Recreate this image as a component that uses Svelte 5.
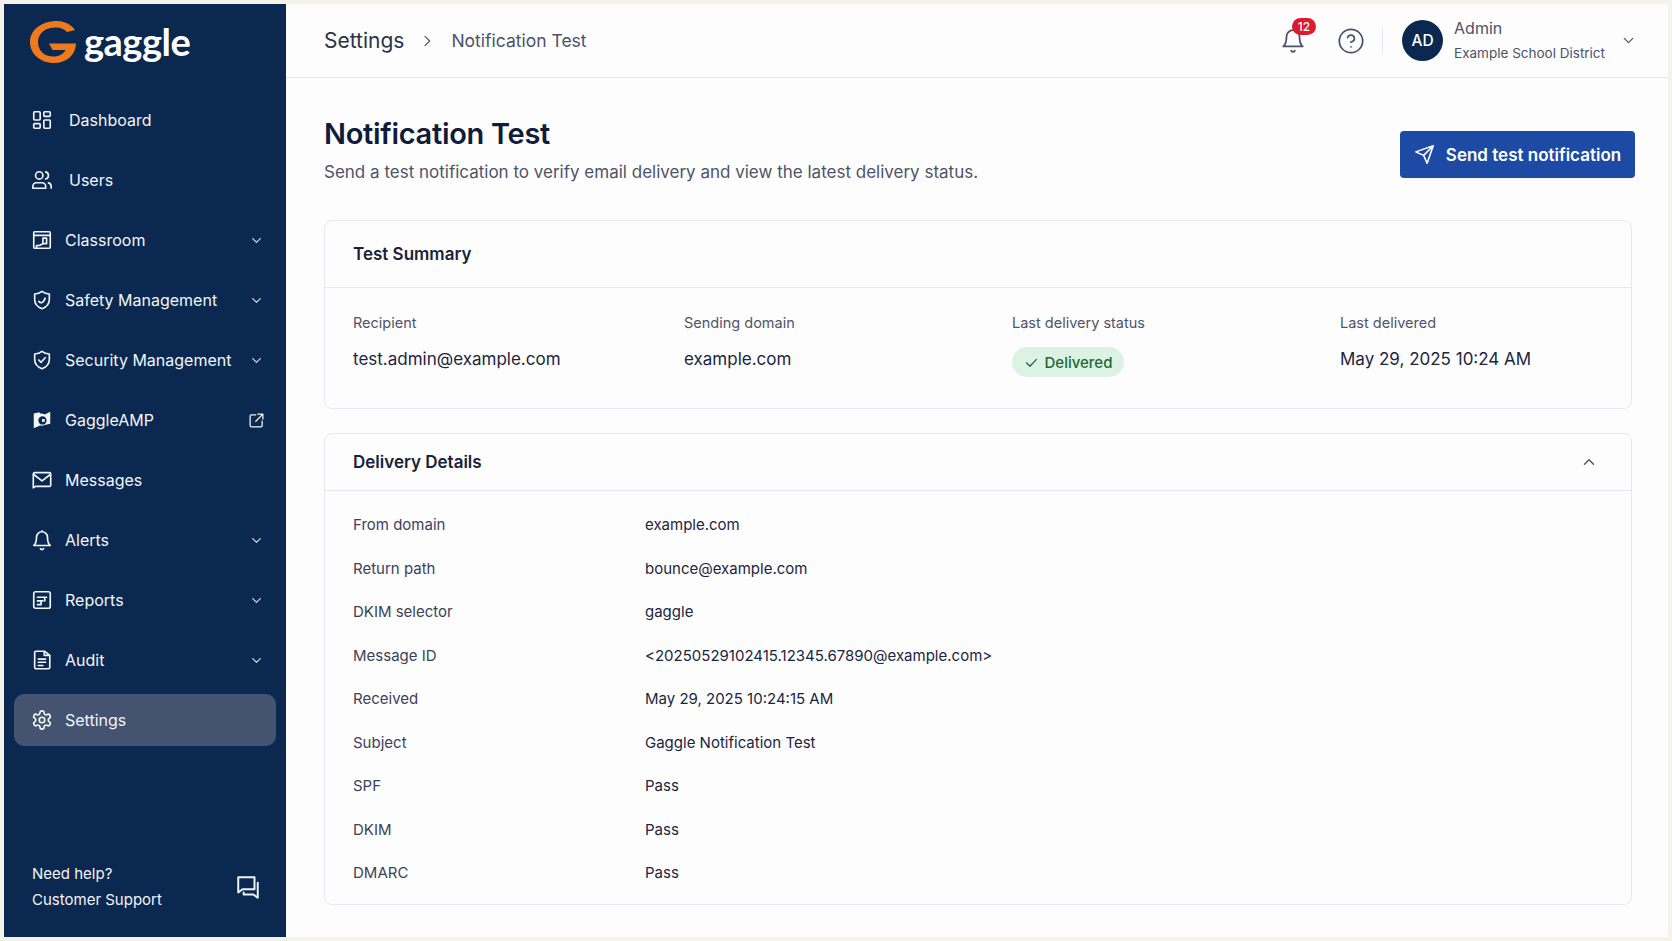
<script lang="ts">
	const shieldA = 'M12 2.5c2.2 1.7 4.8 2.6 8 2.9v6.1c0 4.8-3.2 8.200-8 10-4.800-1.800-8-5.200-8-10V5.400c3.200-.3 5.800-1.200 8-2.900z';

	const nav = [
		{ label: 'Dashboard', wide: true, icon: 'M4 3h5a1 1 0 0 1 1 1v7a1 1 0 0 1-1 1H4a1 1 0 0 1-1-1V4a1 1 0 0 1 1-1z M15 3h5a1 1 0 0 1 1 1v3a1 1 0 0 1-1 1h-5a1 1 0 0 1-1-1V4a1 1 0 0 1 1-1z M15 12h5a1 1 0 0 1 1 1v7a1 1 0 0 1-1 1h-5a1 1 0 0 1-1-1v-7a1 1 0 0 1 1-1z M4 16h5a1 1 0 0 1 1 1v3a1 1 0 0 1-1 1H4a1 1 0 0 1-1-1v-3a1 1 0 0 1 1-1z' },
		{ label: 'Users', wide: true, icon: 'M16 21v-2a4 4 0 0 0-4-4H6a4 4 0 0 0-4 4v2z M13 7a4 4 0 1 1-8 0 4 4 0 0 1 8 0z M22 21v-2a4 4 0 0 0-3-3.870 M16 3.130a4 4 0 0 1 0 7.750' },
		{ label: 'Classroom', chevron: true, icon: 'M4 3h16a1 1 0 0 1 1 1v16a1 1 0 0 1-1 1H4a1 1 0 0 1-1-1V4a1 1 0 0 1 1-1z M3 7h18 M6 21v-3h3 M13 10h4v6h-4z M9 18l4-2' },
		{ label: 'Safety Management', chevron: true, icon: shieldA + ' M8.500 13.500c1 1.200 1.800 1.700 3 1.500 1.500-.4 3-2.500 4-5' },
		{ label: 'Security Management', chevron: true, icon: shieldA + ' M8.500 12l2.500 2.500 4.500-5' },
		{ label: 'GaggleAMP', external: true, brand: true },
		{ label: 'Messages', icon: 'M4 4h16a1.500 1.500 0 0 1 1.500 1.500v12a1.500 1.500 0 0 1-1.500 1.500H5l-2.500 1.500V5.500A1.500 1.500 0 0 1 4 4z M3 6l9 7 9-7' },
		{ label: 'Alerts', chevron: true, icon: 'M6 9a6 6 0 0 1 12 0c0 6 1 7.500 3 9H3c2-1.500 3-3 3-9z M10.300 21.500a1.940 1.940 0 0 0 3.400 0 M12 3V2' },
		{ label: 'Reports', chevron: true, icon: 'M5 3h14a2 2 0 0 1 2 2v14a2 2 0 0 1-2 2H5a2 2 0 0 1-2-2V5a2 2 0 0 1 2-2z M7 9h10 M7 13h6 M15 9v4 M7 17h3 M11 13v4' },
		{ label: 'Audit', chevron: true, icon: 'M4 4a1.500 1.500 0 0 1 1.500-1.500H15L20.500 7v13a1.500 1.500 0 0 1-1.500 1.500H5.500A1.500 1.500 0 0 1 4 20z M14.500 2.500V7h6 M8 11h8 M8 14.500h8 M8 18h5' },
		{ label: 'Settings', active: true, icon: 'M12.220 2h-.44a2 2 0 0 0-2 2v.18a2 2 0 0 1-1 1.730l-.43.25a2 2 0 0 1-2 0l-.15-.08a2 2 0 0 0-2.730.73l-.22.38a2 2 0 0 0 .73 2.730l.15.1a2 2 0 0 1 1 1.720v.51a2 2 0 0 1-1 1.740l-.15.09a2 2 0 0 0-.73 2.730l.22.38a2 2 0 0 0 2.730.73l.15-.08a2 2 0 0 1 2 0l.43.25a2 2 0 0 1 1 1.730V20a2 2 0 0 0 2 2h.44a2 2 0 0 0 2-2v-.18a2 2 0 0 1 1-1.730l.43-.25a2 2 0 0 1 2 0l.15.08a2 2 0 0 0 2.730-.73l.22-.39a2 2 0 0 0-.73-2.730l-.15-.08a2 2 0 0 1-1-1.740v-.5a2 2 0 0 1 1-1.740l.15-.09a2 2 0 0 0 .73-2.730l-.22-.38a2 2 0 0 0-2.730-.73l-.15.08a2 2 0 0 1-2 0l-.43-.25a2 2 0 0 1-1-1.730V4a2 2 0 0 0-2-2z M15 12a3 3 0 1 1-6 0 3 3 0 0 1 6 0z' },
	];

	const summary = [
		{ label: 'Recipient', value: 'test.admin@example.com' },
		{ label: 'Sending domain', value: 'example.com' },
		{ label: 'Last delivery status', badge: 'Delivered' },
		{ label: 'Last delivered', value: 'May 29, 2025 10:24 AM' },
	];

	const details = [
		['From domain', 'example.com'],
		['Return path', 'bounce@example.com'],
		['DKIM selector', 'gaggle'],
		['Message ID', '<20250529102415.12345.67890@example.com>'],
		['Received', 'May 29, 2025 10:24:15 AM'],
		['Subject', 'Gaggle Notification Test'],
		['SPF', 'Pass'],
		['DKIM', 'Pass'],
		['DMARC', 'Pass'],
	];
</script>

<div class="frame">
	<aside class="sidebar">
		<div class="logo">
			<svg class="logo-mark" viewBox="0 0 46 42" aria-hidden="true">
				<path fill="#ee7a1c" d="M45 9C41 3.500 35 0 27 0 11.500 0 0 9 0 21s10.500 21 24 21c13 0 21.500-8 22-19.500H19l3.500 6.500h13c-2 4-6.500 6.500-12 6.500C14 35.500 8 29.500 8 21S15 6.500 26 6.500c5 0 8 1.500 11 4.500z" />
			</svg>
			<span class="logo-text">gaggle</span>
		</div>

		<nav class="nav">
			{#each nav as item}
				<div class="item" class:active={item.active} class:wide={item.wide}>
					{#if item.brand}
						<svg class="icon" viewBox="0 0 24 24" aria-hidden="true">
							<path class="solid" fill-rule="evenodd" d="M3 5l6-1.500 1 1.500a8 8 0 0 1 5 1l6-3v13l-6 1.500a8 8 0 0 1-5 .5L3 21z M12.500 8a4.500 4.500 0 1 0 0 9 4.500 4.500 0 0 0 0-9z" />
							<path class="solid" d="M12 11h3v3h-3z" />
						</svg>
					{:else}
						<svg class="icon" viewBox="0 0 24 24" aria-hidden="true"><path d={item.icon} /></svg>
					{/if}
					<span class="label">{item.label}</span>
					{#if item.chevron}
						<svg class="chev" viewBox="0 0 24 24" aria-hidden="true"><path d="M6 9l6 6 6-6" /></svg>
					{:else if item.external}
						<svg class="ext" viewBox="0 0 24 24" aria-hidden="true"><path d="M11 4H5a2 2 0 0 0-2 2v13a2 2 0 0 0 2 2h13a2 2 0 0 0 2-2v-6 M14 3h7v7 M21 3L11 13" /></svg>
					{/if}
				</div>
			{/each}
		</nav>

		<div class="help">
			<div class="help-text">
				<div>Need help?</div>
				<div>Customer Support</div>
			</div>
			<svg class="help-icon" viewBox="0 0 24 24" aria-hidden="true"><path d="M3 3h15v11H7l-4 3z M21 8v14l-4-3H8v-2" /></svg>
		</div>
	</aside>

	<div class="main">
		<header class="topbar">
			<div class="crumbs">
				<span class="crumb-root">Settings</span>
				<svg class="crumb-sep" viewBox="0 0 24 24" aria-hidden="true"><path d="M9 5l7 7-7 7" /></svg>
				<span class="crumb-leaf">Notification Test</span>
			</div>
			<div class="tools">
				<div class="bell">
					<svg viewBox="0 0 24 24" aria-hidden="true"><path d="M6 8a6 6 0 0 1 12 0c0 7 3 9 3 9H3s3-2 3-9z M10.300 21a1.940 1.940 0 0 0 3.400 0" /></svg>
					<span class="count">12</span>
				</div>
				<svg class="help-circle" viewBox="0 0 24 24" aria-hidden="true"><path d="M22 12a10 10 0 1 1-20 0 10 10 0 0 1 20 0z M9.090 9a3 3 0 0 1 5.830 1c0 2-3 3-3 3 M12 17h.01" /></svg>
				<span class="divider"></span>
				<div class="avatar">AD</div>
				<div class="who">
					<div class="who-name">Admin</div>
					<div class="who-org">Example School District</div>
				</div>
				<svg class="who-chev" viewBox="0 0 24 24" aria-hidden="true"><path d="M6 9l6 6 6-6" /></svg>
			</div>
		</header>

		<main class="content">
			<div class="page-head">
				<div>
					<h1>Notification Test</h1>
					<p>Send a test notification to verify email delivery and view the latest delivery status.</p>
				</div>
				<button class="send">
					<svg viewBox="0 0 24 24" aria-hidden="true"><path d="M22 2l-7 20-4-9-9-4z M22 2L11 13" /></svg>
					Send test notification
				</button>
			</div>

			<section class="card">
				<div class="card-head summary-head"><h2>Test Summary</h2></div>
				<div class="summary">
					{#each summary as cell}
						<div>
							<div class="cell-label">{cell.label}</div>
							{#if cell.badge}
								<span class="badge">
									<svg viewBox="0 0 24 24" aria-hidden="true"><path d="M4 12.500l5.500 5.500L20 7" /></svg>
									{cell.badge}
								</span>
							{:else}
								<div class="cell-value">{cell.value}</div>
							{/if}
						</div>
					{/each}
				</div>
			</section>

			<section class="card details-card">
				<div class="card-head details-head">
					<h2>Delivery Details</h2>
					<svg viewBox="0 0 24 24" aria-hidden="true"><path d="M6 15l6-6 6 6" /></svg>
				</div>
				<div class="details">
					{#each details as [name, value]}
						<div class="row">
							<span class="row-name">{name}</span>
							<span class="row-value">{value}</span>
						</div>
					{/each}
				</div>
			</section>
		</main>
	</div>
</div>

<style>
	:global(body) {
		margin: 0;
		background: #f5f2ea;
		font-family: Inter, "Liberation Sans", sans-serif;
	}

	.frame {
		display: flex;
		height: 933px;
		margin: 4px 4px 4px 4px;
		background: #fdfdfe;
		overflow: hidden;
	}

	svg {
		fill: none;
		stroke: currentColor;
		stroke-width: 2;
		stroke-linecap: round;
		stroke-linejoin: round;
		flex: none;
	}

	/* sidebar */
	.sidebar {
		width: 282px;
		flex: none;
		display: flex;
		flex-direction: column;
		background: #0b2850;
		color: #f2f5f9;
	}

	.logo {
		height: 86px;
		display: flex;
		align-items: center;
		gap: 8px;
		padding-left: 26px;
		padding-bottom: 10px;
		box-sizing: border-box;
	}

	.logo-mark {
		width: 46px;
		height: 42px;
		stroke: none;
	}

	.logo-text {
		font-family: Lato, sans-serif;
		font-weight: 700;
		font-size: 38px;
		line-height: 1;
		letter-spacing: -0.5px;
		color: #fff;
		margin-top: -2px;
	}

	.nav {
		display: flex;
		flex-direction: column;
		padding: 0 10px;
	}

	.item {
		height: 60px;
		display: flex;
		align-items: center;
		padding: 0 12px 0 17px;
		font-size: 16px;
	}

	.item.active {
		height: 52px;
		margin-top: 4px;
		margin-bottom: 4px;
		background: #44536f;
		border-radius: 10px;
	}

	.icon {
		width: 22px;
		height: 22px;
		stroke-width: 1.8;
		margin-right: 12px;
	}

	.solid {
		fill: currentColor;
		stroke: none;
	}

	.item.wide .icon {
		margin-right: 16px;
	}

	.label {
		flex: 1;
	}

	.chev {
		width: 15px;
		height: 15px;
		opacity: 0.85;
		margin-right: 0;
	}

	.ext {
		width: 17px;
		height: 17px;
		margin-right: -1px;
		stroke-width: 1.8;
	}

	.help {
		margin-top: auto;
		height: 100px;
		padding: 0 25px 0 28px;
		display: flex;
		align-items: center;
		justify-content: space-between;
		font-size: 15px;
		line-height: 26px;
	}

	.help-icon {
		width: 26px;
		height: 26px;
		stroke-width: 1.8;
	}

	/* top bar */
	.main {
		flex: 1;
		min-width: 0;
		display: flex;
		flex-direction: column;
	}

	.topbar {
		height: 74px;
		flex: none;
		box-sizing: border-box;
		border-bottom: 1px solid #e2e4ec;
		display: flex;
		align-items: center;
		justify-content: space-between;
		padding: 0 31px 0 38px;
	}

	.crumbs {
		display: flex;
		align-items: center;
		color: #4d5267;
	}

	.crumb-root {
		font-size: 21px;
		color: #2a3248;
	}

	.crumb-sep {
		width: 16px;
		height: 16px;
		margin: 0 16px 0 15px;
		stroke-width: 1.7;
	}

	.crumb-leaf {
		font-size: 17.500px;
	}

	.tools {
		display: flex;
		align-items: center;
		color: #4d5267;
	}

	.bell {
		position: relative;
		width: 26px;
		height: 26px;
	}

	.bell svg {
		width: 26px;
		height: 26px;
		stroke-width: 1.600;
	}

	.count {
		position: absolute;
		left: 12px;
		top: -10px;
		width: 24px;
		height: 17px;
		border-radius: 9px;
		background: #dc1c2e;
		color: #fff;
		font-size: 12px;
		font-weight: 500;
		line-height: 17px;
		text-align: center;
	}

	.help-circle {
		width: 28px;
		height: 28px;
		margin-left: 31px;
		stroke-width: 1.500;
	}

	.divider {
		width: 1px;
		height: 26px;
		background: #e6e7ec;
		margin: 0 19px 0 17px;
	}

	.avatar {
		width: 41px;
		height: 41px;
		border-radius: 50%;
		background: #0b2850;
		color: #fff;
		font-size: 15.500px;
		font-weight: 500;
		display: flex;
		align-items: center;
		justify-content: center;
	}

	.who {
		margin-left: 11px;
	}

	.who-name {
		font-size: 16px;
		line-height: 25px;
	}

	.who-org {
		font-size: 13.500px;
		line-height: 25px;
	}

	.who-chev {
		width: 17px;
		height: 17px;
		margin-left: 15px;
		stroke-width: 1.800;
	}

	/* content */
	.content {
		flex: 1;
		min-height: 0;
		padding: 0 36px 0 38px;
	}

	.page-head {
		display: flex;
		justify-content: space-between;
		align-items: flex-start;
		height: 142px;
		padding-top: 36px;
		box-sizing: border-box;
	}

	h1 {
		margin: 0;
		font-size: 29px;
		font-weight: 600;
		line-height: 40px;
		letter-spacing: -0.3px;
		color: #121c38;
	}

	p {
		margin: 6px 0 0;
		font-size: 17px;
		line-height: 24px;
		color: #4f5468;
	}

	.send {
		margin: 17px -3px 0 0;
		height: 47px;
		width: 235px;
		border: none;
		border-radius: 4px;
		background: #1d4aa5;
		color: #fff;
		font: 600 17px Inter, sans-serif;
		display: flex;
		align-items: center;
		justify-content: center;
		gap: 11px;
	}

	.send svg {
		width: 21px;
		height: 21px;
		stroke-width: 1.800;
	}

	.card {
		border: 1px solid #e8e9ee;
		border-radius: 8px;
		background: #fdfdfe;
		color: #1c2540;
	}

	.card-head {
		display: flex;
		align-items: center;
		justify-content: space-between;
		border-bottom: 1px solid #e8e9ee;
		padding: 0 33px 0 28px;
	}

	.summary-head {
		height: 66px;
	}

	.details-head {
		height: 56px;
		color: #4d5267;
	}

	.details-head svg {
		width: 18px;
		height: 18px;
		stroke-width: 1.800;
	}

	h2 {
		margin: 0;
		font-size: 17px;
		font-weight: 600;
		color: #1a2238;
	}

	.summary {
		display: grid;
		grid-template-columns: 331px 328px 328px 1fr;
		height: 120px;
		padding: 25px 0 0 28px;
		box-sizing: border-box;
	}

	.cell-label {
		font-size: 14.500px;
		line-height: 20px;
		color: #4f5468;
	}

	.cell-value {
		margin-top: 14px;
		font-size: 17px;
		line-height: 24px;
	}

	.badge {
		margin-top: 14px;
		width: 112px;
		height: 30px;
		border-radius: 15px;
		background: #dcf3e3;
		color: #19693a;
		font-size: 15px;
		font-weight: 500;
		display: flex;
		align-items: center;
		justify-content: center;
		gap: 6px;
	}

	.badge svg {
		width: 15px;
		height: 15px;
	}

	.details-card {
		margin-top: 24px;
	}

	.details {
		padding: 12px 0 9px 28px;
	}

	.row {
		display: grid;
		grid-template-columns: 292px 1fr;
		height: 43.500px;
		align-items: center;
		font-size: 15px;
	}

	.row-name {
		color: #3c4258;
	}
</style>
